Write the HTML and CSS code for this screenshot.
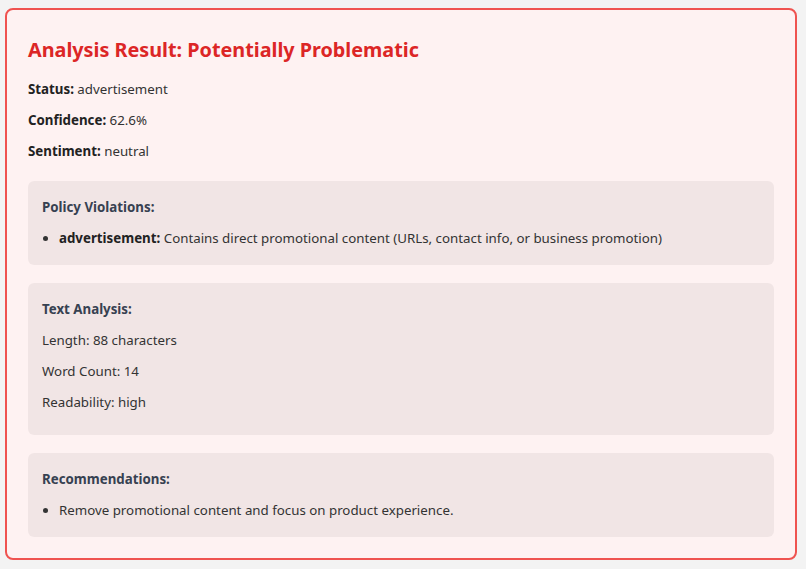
FILE: index.html
```html
<!DOCTYPE html>
<html lang="en">
<head>
  <meta charset="UTF-8">
  <meta name="viewport" content="width=device-width, initial-scale=1.0">
  <title>Analysis Result</title>
  <link rel="stylesheet" href="styles.css">
</head>
<body>

<div class="result-card">
  <h3 class="result-title">Analysis Result: Potentially Problematic</h3>
  <p><strong>Status:</strong> advertisement</p>
  <p><strong>Confidence:</strong> 62.6%</p>
  <p><strong>Sentiment:</strong> neutral</p>

  <div class="section">
    <h4>Policy Violations:</h4>
    <ul>
      <li><strong>advertisement:</strong> Contains direct promotional content (URLs, contact info, or business promotion)</li>
    </ul>
  </div>

  <div class="section">
    <h4>Text Analysis:</h4>
    <p>Length: 88 characters</p>
    <p>Word Count: 14</p>
    <p>Readability: high</p>
  </div>

  <div class="section">
    <h4>Recommendations:</h4>
    <ul>
      <li>Remove promotional content and focus on product experience.</li>
    </ul>
  </div>
</div>

</body>
</html>
```

FILE: styles.css
```css
body {
  font-family: "Noto Sans", "Open Sans", sans-serif;
  font-size: 13.3px;
  margin: 8px 9px 8px 5px;
  background-color: #f3f3f3;
  color: #333;
}

.result-card {
  background-color: #fef2f2;
  border: 2px solid #ef5350;
  border-radius: 8px;
  padding: 21px;
}

.result-title {
  color: #dc2626;
  font-size: 19.8px;
  line-height: 24px;
  margin: 7px 0 16px;
}

.result-card p {
  line-height: 23px;
  margin: 8px 0;
}

.result-card strong {
  color: #222;
}

.section {
  background-color: rgba(0, 0, 0, 0.05);
  border-radius: 6px;
  padding: 15px 14px;
  margin-top: 18px;
}

.section h4 {
  color: #374151;
  font-size: 13.3px;
  line-height: 23px;
  margin: 0 0 8px;
}

.section p:last-child {
  margin-bottom: 6px;
}

.section ul {
  margin: 0;
  padding-left: 17px;
}

.section li {
  line-height: 23px;
}
```
